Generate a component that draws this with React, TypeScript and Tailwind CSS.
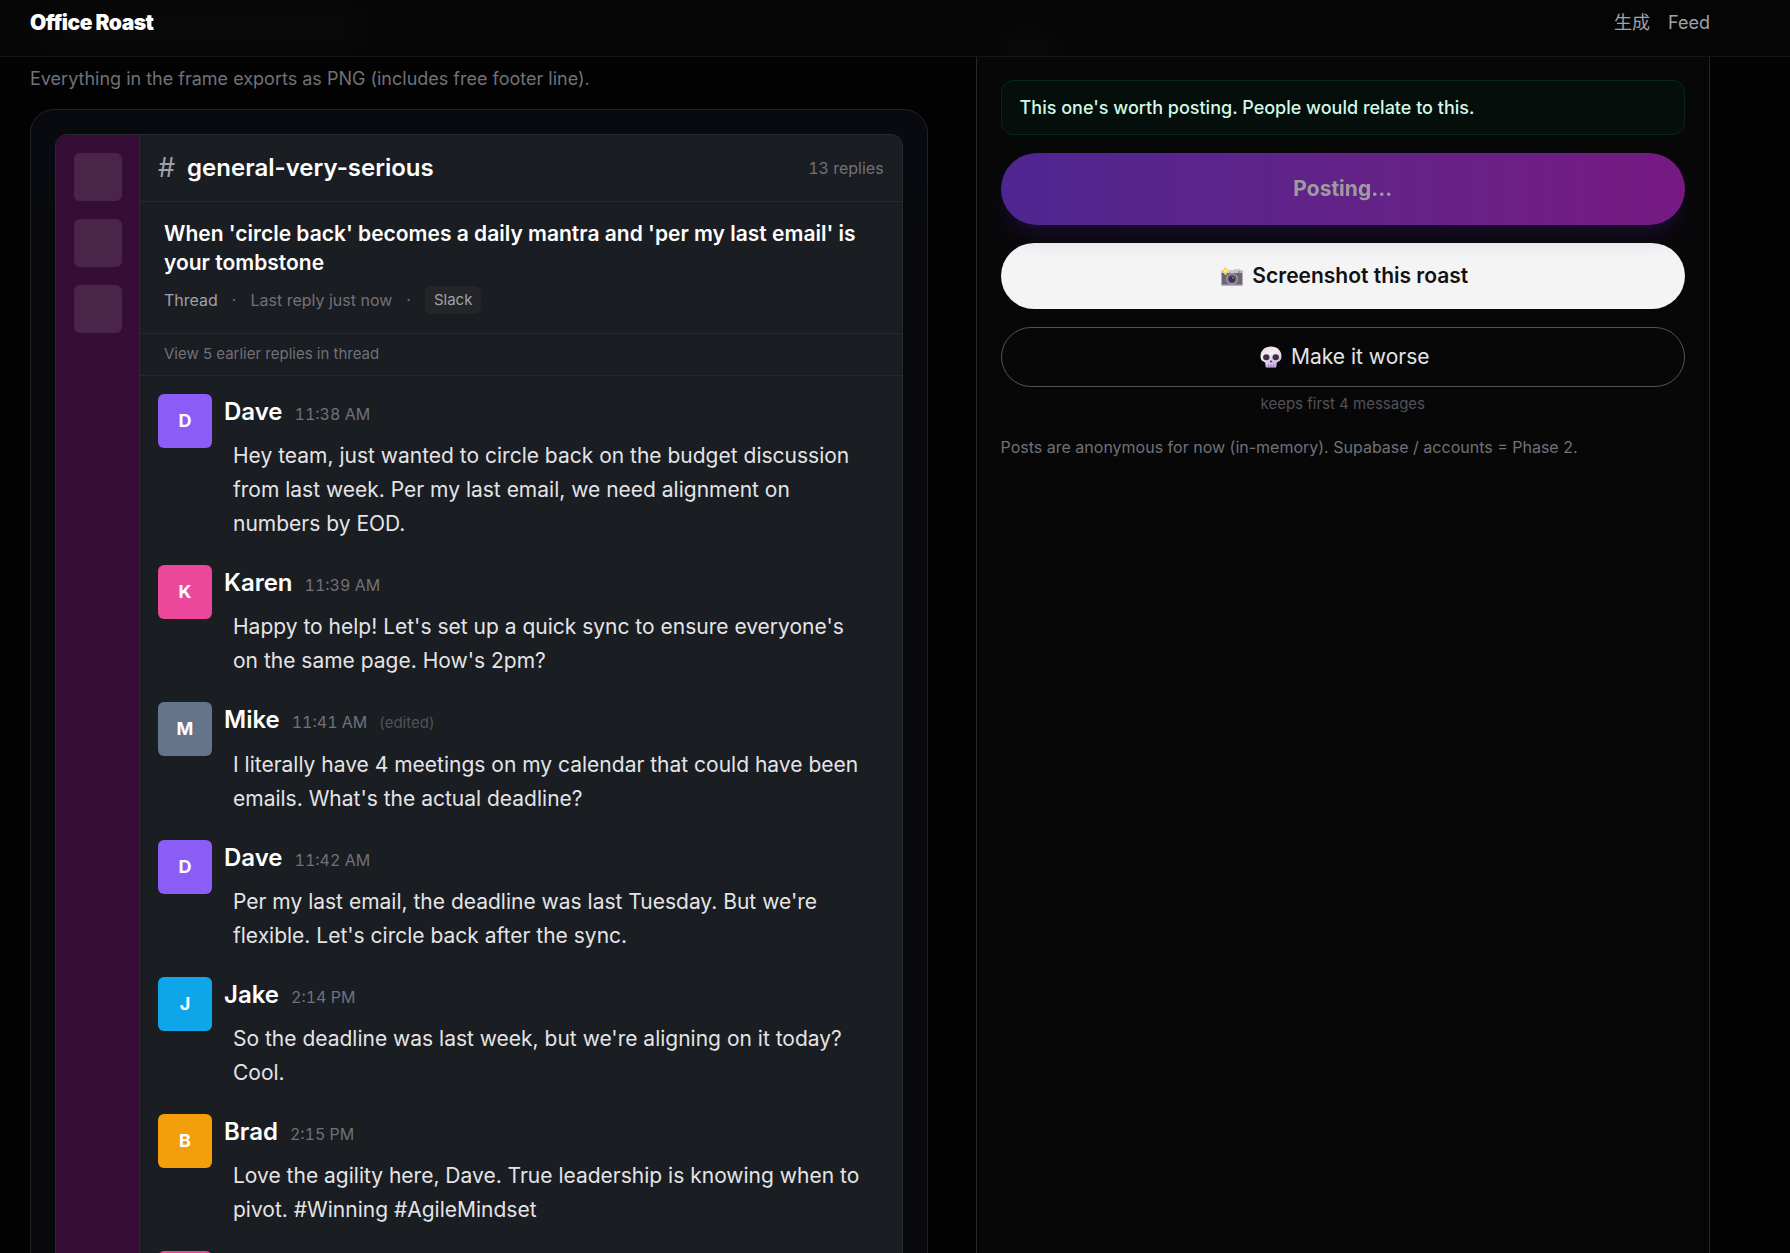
import type { ReactNode } from "react";

type Message = {
  name: string;
  time: string;
  text: string;
  color: string;
  edited?: boolean;
};

const messages: Message[] = [
  {
    name: "Dave",
    time: "11:38 AM",
    text: "Hey team, just wanted to circle back on the budget discussion from last week. Per my last email, we need alignment on numbers by EOD.",
    color: "bg-[#8b5cf6]",
  },
  {
    name: "Karen",
    time: "11:39 AM",
    text: "Happy to help! Let's set up a quick sync to ensure everyone's on the same page. How's 2pm?",
    color: "bg-[#ec4899]",
  },
  {
    name: "Mike",
    time: "11:41 AM",
    text: "I literally have 4 meetings on my calendar that could have been emails. What's the actual deadline?",
    color: "bg-[#64748b]",
    edited: true,
  },
  {
    name: "Dave",
    time: "11:42 AM",
    text: "Per my last email, the deadline was last Tuesday. But we're flexible. Let's circle back after the sync.",
    color: "bg-[#8b5cf6]",
  },
  {
    name: "Jake",
    time: "2:14 PM",
    text: "So the deadline was last week, but we're aligning on it today? Cool.",
    color: "bg-[#0ea5e9]",
  },
  {
    name: "Brad",
    time: "2:15 PM",
    text: "Love the agility here, Dave. True leadership is knowing when to pivot. #Winning #AgileMindset",
    color: "bg-[#f59e0b]",
  },
];

function CameraIcon() {
  return (
    <svg className="ml-1" width="22" height="22" viewBox="0 0 22 22" aria-hidden="true">
      <path d="M13 4.500h6v2h-6z" fill="#a9a2b3" />
      <rect x="0.5" y="5" width="21" height="16" rx="1.2" fill="#6b6575" />
      <path d="M1.700 5h18.600a1.200 1.200 0 0 1 1.200 1.200V8H.5V6.200A1.200 1.200 0 0 1 1.700 5z" fill="#c9c5d0" />
      <path d="M.5 19.500h21v.5a1 1 0 0 1-1 1h-19a1 1 0 0 1-1-1z" fill="#b9aec6" />
      <circle cx="11" cy="14" r="5.800" fill="#b5aebf" />
      <circle cx="11" cy="14" r="4.800" fill="#686172" />
      <circle cx="11" cy="14" r="3.100" fill="#3a2f47" />
      <circle cx="12" cy="12.800" r="1" fill="#8b7ba0" />
      <rect x="17" y="6.500" width="2.500" height="1" fill="#6b6575" />
      <path d="M4.500 2Q5.500 5.100 8.500 6 5.500 6.900 4.500 10 3.500 6.900.5 6 3.500 5.100 4.500 2z" fill="#f7cf4b" stroke="#f7d976" />
      <circle cx="4.500" cy="6" r="1.400" fill="#fff3b0" />
    </svg>
  );
}

function SkullIcon() {
  return (
    <svg className="ml-1" width="22" height="22" viewBox="0 0 22 22" aria-hidden="true">
      <defs>
        <linearGradient id="bone" x1="0" y1="0" x2="0.4" y2="1">
          <stop offset="0" stopColor="#f2d5dc" />
          <stop offset="0.45" stopColor="#f3edf7" />
          <stop offset="1" stopColor="#cdb2e6" />
        </linearGradient>
      </defs>
      <path
        d="M11 .5C4.800.5.5 4.700.5 10.200c0 3 1.200 4.600 3 5.400 1.300.6 1.800 1.100 1.900 2.400l.1 2c.1 1 .7 1.500 1.500 1.500h8c.8 0 1.400-.5 1.500-1.500l.1-2c.1-1.300.6-1.800 1.900-2.400 1.800-.8 3-2.400 3-5.400C21.500 4.700 17.200.5 11 .5z"
        fill="url(#bone)"
      />
      <ellipse cx="6.300" cy="11.200" rx="3.200" ry="3" fill="#43303f" />
      <ellipse cx="15.700" cy="11.200" rx="3.200" ry="3" fill="#43303f" />
      <path d="M11 14l1.500 2.200h-3z" fill="#43303f" />
      <path d="M8.500 18.500v3M11 18.500v3M13.500 18.500v3" stroke="#8c6fa8" strokeWidth="0.9" />
    </svg>
  );
}

function MessageRow({ message }: { message: Message }) {
  return (
    <li className="flex gap-3 pb-6">
      <div
        className={`${message.color} flex size-[54px] shrink-0 items-center justify-center rounded-md text-lg font-bold text-white`}
      >
        {message.name[0]}
      </div>
      <div className="min-w-0 flex-1">
        <div className="flex items-baseline gap-3 leading-9">
          <span className="text-2xl leading-9 font-semibold text-white">{message.name}</span>
          <time className="text-base leading-9 text-[#71717a] tabular-nums">{message.time}</time>
          {message.edited && <span className="text-[15px] leading-9 text-[#52525b]">(edited)</span>}
        </div>
        <p className="mt-[7px] pr-6 pl-[9px] text-[21px] leading-[34px] text-[#e4e4e7]">
          {message.text}
        </p>
      </div>
    </li>
  );
}

function NavLink({ children }: { children: ReactNode }) {
  return (
    <a href="#" className="text-[#a1a1aa] hover:text-white">
      {children}
    </a>
  );
}

export default function App() {
  return (
    <div className="flex h-screen flex-col overflow-hidden bg-[#030303] font-['Inter','Noto_Sans_CJK_SC',sans-serif] text-white">
      <header className="relative shrink-0 border-b border-[#151515] bg-[#050505]">
        <div className="pointer-events-none absolute inset-0 overflow-hidden" aria-hidden="true">
          <div className="absolute top-4 left-8 h-6 w-[340px] bg-white/5 blur-xl" />
          <div className="absolute top-10 left-[1000px] h-4 w-[60px] bg-white/6 blur-lg" />
        </div>
        <div className="relative flex max-w-[1740px] items-center justify-between px-[30px] pt-[9px] pb-[19px]">
          <a href="#" className="text-[21px] leading-7 font-black tracking-tight">
            Office Roast
          </a>
          <nav className="flex gap-[18px] text-lg leading-7">
            <NavLink>生成</NavLink>
            <NavLink>Feed</NavLink>
          </nav>
        </div>
      </header>

      <main className="grid min-h-0 max-w-[1740px] flex-1 grid-cols-[11fr_9fr] gap-12 px-[30px]">
        <section className="min-w-0 pt-2">
          <p className="text-lg leading-7 text-[#71717a]">
            Everything in the frame exports as PNG (includes free footer line).
          </p>
          <div className="mt-4 rounded-3xl border border-[#242427] bg-[#0a0b10] p-6">
            <div className="flex overflow-hidden rounded-xl border border-[#27292c] bg-[#1a1d21] shadow-[0_38px_75px_-18px_rgba(0,0,0,0.5)]">
              <aside className="flex w-[84px] shrink-0 flex-col gap-[18px] border-r border-[#282b2e] bg-[#350d36] p-[18px] pr-[17px]">
                <div className="size-12 rounded-md bg-white/10" />
                <div className="size-12 rounded-md bg-white/10" />
                <div className="size-12 rounded-md bg-white/10" />
              </aside>
              <div className="min-w-0 flex-1">
                <div className="flex items-center border-b border-[#25292c] px-[18px] py-[15px]">
                  <span className="text-[27px] leading-9 text-[#a1a1aa]">#</span>
                  <h2 className="ml-3 flex-1 text-2xl leading-9 font-semibold">general-very-serious</h2>
                  <span className="text-base text-[#71717a] tabular-nums">13 replies</span>
                </div>
                <div className="border-b border-[#25292c] px-6 pt-[17px] pb-[19px]">
                  <h3 className="text-[21px] leading-[29px] font-semibold">
                    When 'circle back' becomes a daily mantra and 'per my last email' is your tombstone
                  </h3>
                  <div className="mt-[9px] flex items-center gap-[14px] text-base leading-7 text-[#71717a]">
                    <span className="text-[#a1a1aa]">Thread</span>
                    <span>·</span>
                    <span>Last reply just now</span>
                    <span>·</span>
                    <span className="rounded-md bg-[#242529] px-[9px] text-[15px] leading-7 text-[#a1a1aa]">
                      Slack
                    </span>
                  </div>
                </div>
                <div className="border-b border-[#25292c] px-6 pt-[7px] pb-[9px] text-[15px] leading-[25px] text-[#71717a]">
                  View 5 earlier replies in thread
                </div>
                <ul className="px-[18px] pt-[18px]">
                  {messages.map((message) => (
                    <MessageRow key={message.time} message={message} />
                  ))}
                  <li>
                    <div className="size-[54px] rounded-md bg-[#ec4899]" />
                  </li>
                </ul>
              </div>
            </div>
          </div>
        </section>

        <aside className="min-w-0 border-x border-[#27272a] bg-[#070707] px-6 pt-[23px]">
          <p className="rounded-xl border border-[#06261d] bg-[#060e0c] px-[18px] py-[13px] text-lg leading-[27px] font-medium text-[#d0fae5]">
            This one's worth posting. People would relate to this.
          </p>
          <button
            type="button"
            disabled
            className="mt-[18px] h-[72px] w-full rounded-full bg-linear-to-r from-[#7f3aed] to-[#c026d3] text-[21px] font-bold text-white opacity-60 shadow-[0_15px_23px_-4px_rgba(76,29,149,0.4),0_6px_9px_-6px_rgba(76,29,149,0.4)]"
          >
            Posting…
          </button>
          <button
            type="button"
            className="mt-[18px] flex h-[66px] w-full items-center justify-center gap-[9px] rounded-full bg-[#f4f4f5] text-[21px] font-semibold text-[#111113]"
          >
            <CameraIcon />
            Screenshot this roast
          </button>
          <button
            type="button"
            className="mt-[18px] flex h-[60px] w-full items-center justify-center gap-[9px] rounded-full border border-[#52525b] text-[21px] text-[#e4e4e7]"
          >
            <SkullIcon />
            Make it worse
          </button>
          <p className="mt-1 text-center text-[15px] leading-[25px] text-[#52525b]">
            keeps first 4 messages
          </p>
          <p className="mt-[18px] text-base leading-[26px] text-[#71717a]">
            Posts are anonymous for now (in-memory). Supabase / accounts = Phase 2.
          </p>
        </aside>
      </main>
    </div>
  );
}
